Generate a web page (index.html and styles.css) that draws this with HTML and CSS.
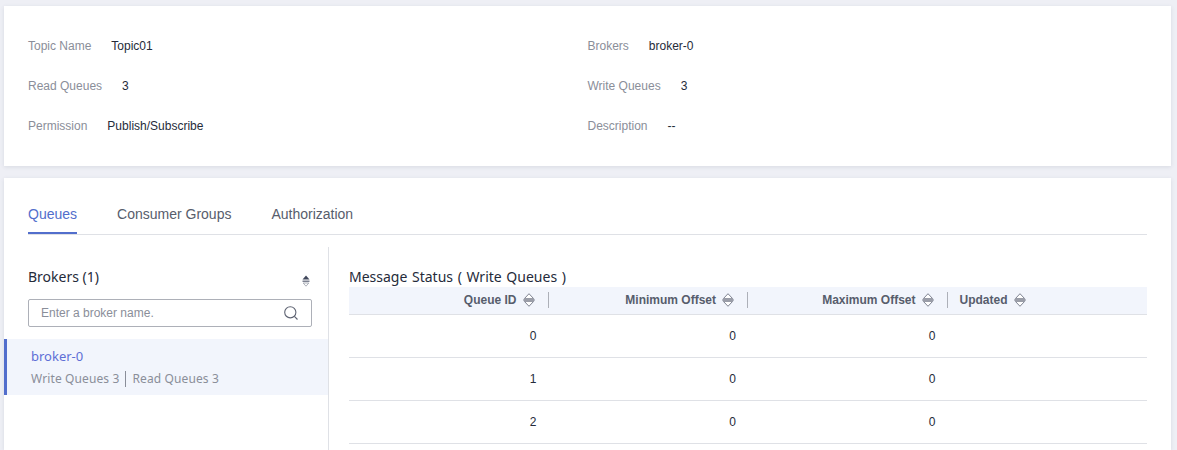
FILE: index.html
```html
<!DOCTYPE html>
<html lang="en">
<head>
<meta charset="utf-8">
<title>Topic01</title>
<link rel="stylesheet" href="styles.css">
</head>
<body>
<main class="page">
  <section class="card info">
    <div class="field"><span class="label">Topic Name</span><span class="value">Topic01</span></div>
    <div class="field"><span class="label">Brokers</span><span class="value">broker-0</span></div>
    <div class="field"><span class="label">Read Queues</span><span class="value">3</span></div>
    <div class="field"><span class="label">Write Queues</span><span class="value">3</span></div>
    <div class="field"><span class="label">Permission</span><span class="value">Publish/Subscribe</span></div>
    <div class="field"><span class="label">Description</span><span class="value">--</span></div>
  </section>
  <section class="card detail">
    <nav class="tabs">
      <a class="tab active">Queues</a>
      <a class="tab">Consumer Groups</a>
      <a class="tab">Authorization</a>
    </nav>
    <div class="split">
      <aside class="side">
        <div class="side-head">
          <h2 class="side-title">Brokers (1)</h2>
          <svg class="side-sort" width="8" height="12" viewBox="0 0 8 12"><path d="M4 .5 7.5 4.5H.5z" fill="#41485c"/><path d="M.5 5.5h7v1.5h-7z" fill="#7c8190"/><path d="M1.2 8h5.6L4 11.2z" fill="#fff" stroke="#9a9eaa" stroke-width=".8"/></svg>
        </div>
        <div class="search">
          <span class="search-text">Enter a broker name.</span>
          <svg class="search-icon" width="16" height="16" viewBox="0 0 16 16" fill="none" stroke="#5f6473" stroke-width="1.1"><circle cx="7.3" cy="7.3" r="5.6"/><path d="m11.4 11.4 3.1 3.1"/></svg>
        </div>
        <div class="broker">
          <div class="broker-name">broker-0</div>
          <div class="broker-meta"><span>Write Queues 3</span><i class="meta-sep"></i><span>Read Queues 3</span></div>
        </div>
      </aside>
      <div class="content">
        <h3 class="content-title">Message Status ( Write Queues )</h3>
        <table class="table">
          <thead>
            <tr>
              <th class="num"><span class="th-inner">Queue ID <svg class="sort" width="12" height="14" viewBox="0 0 12 14"><path d="M6 .7 11 6v2l-5 5.3L1 8V6z" fill="#fff" stroke="#7f8391"/><path d="M1 5h10v4H1z" fill="#9a9da8"/></svg></span></th>
              <th class="num"><span class="th-inner">Minimum Offset <svg class="sort" width="12" height="14" viewBox="0 0 12 14"><path d="M6 .7 11 6v2l-5 5.3L1 8V6z" fill="#fff" stroke="#7f8391"/><path d="M1 5h10v4H1z" fill="#9a9da8"/></svg></span></th>
              <th class="num"><span class="th-inner">Maximum Offset <svg class="sort" width="12" height="14" viewBox="0 0 12 14"><path d="M6 .7 11 6v2l-5 5.3L1 8V6z" fill="#fff" stroke="#7f8391"/><path d="M1 5h10v4H1z" fill="#9a9da8"/></svg></span></th>
              <th class="txt"><span class="th-inner">Updated <svg class="sort" width="12" height="14" viewBox="0 0 12 14"><path d="M6 .7 11 6v2l-5 5.3L1 8V6z" fill="#fff" stroke="#7f8391"/><path d="M1 5h10v4H1z" fill="#9a9da8"/></svg></span></th>
            </tr>
          </thead>
          <tbody>
            <tr><td class="num">0</td><td class="num">0</td><td class="num">0</td><td></td></tr>
            <tr><td class="num">1</td><td class="num">0</td><td class="num">0</td><td></td></tr>
            <tr><td class="num">2</td><td class="num">0</td><td class="num">0</td><td></td></tr>
          </tbody>
        </table>
      </div>
    </div>
  </section>
</main>
</body>
</html>
```

FILE: styles.css
```css
* { box-sizing: border-box; }
html, body { margin: 0; height: 450px; overflow: hidden; }
body { background: #eeeff5; font-family: "Liberation Sans", Arial, sans-serif; font-size: 12px; color: #252b3a; }
.page { padding: 6px 6px 0 4px; display: flex; flex-direction: column; gap: 12px; }
.card { background: #fff; box-shadow: 0 1px 4px rgba(60, 70, 100, .12); }
.info { height: 160px; padding: 20px 24px; display: grid; grid-template-columns: 1fr 1fr; grid-auto-rows: 40px; }
.field { display: flex; align-items: center; gap: 20px; }
.label { color: #8a8e99; }
.value { color: #252b3a; }
.detail { padding: 16px 24px 0; height: 272px; overflow: hidden; }
.tabs { display: flex; gap: 40px; height: 41px; border-bottom: 1px solid #dfe1e6; }
.tab { font-size: 14px; line-height: 40px; height: 40px; color: #575d6c; }
.tab.active { color: #526ecc; border-bottom: 2px solid #526ecc; }
.split { display: flex; margin: 12px -24px 0; }
.side { width: 325px; height: 240px; border-right: 1px solid #dfe1e6; flex: none; }
.side-head { display: flex; justify-content: space-between; align-items: flex-end; height: 40px; padding: 0 18px 0 24px; }
.side-title { margin: 0; font-family: "Noto Sans", sans-serif; font-size: 14px; font-weight: 400; line-height: 20px; color: #252b3a; }
.search { margin: 12px 16px 0 24px; height: 28px; border: 1px solid #adb0b8; border-radius: 2px; display: flex; align-items: center; justify-content: space-between; padding: 0 12px; }
.search-text { color: #8a8e99; }
.broker { margin-top: 12px; height: 56px; background: #f2f5fc; border-left: 3px solid #526ecc; padding: 9px 0 0 24px; font-family: "Noto Sans", sans-serif; }
.broker-name { font-size: 13px; line-height: 17px; color: #5e6fd6; }
.broker-meta { margin-top: 5px; display: flex; align-items: center; gap: 6px; font-size: 12px; letter-spacing: .12px; line-height: 17px; color: #8a8e99; }
.meta-sep { width: 1px; height: 16px; background: #8a8e99; }
.content { flex: 1; padding: 20px 24px 0 20px; }
.content-title { margin: 0 0 1px; font-family: "Noto Sans", sans-serif; font-size: 14px; font-weight: 400; line-height: 19px; word-spacing: 1px; color: #252b3a; }
.table { width: 798px; border-collapse: collapse; table-layout: fixed; }
.table th { height: 27px; padding: 0; background: #f2f5fc; font-size: 12px; font-weight: 700; color: #575d6c; border-bottom: 1px solid #dfe1e6; }
.table th.num { text-align: right; }
.table th.txt { text-align: left; }
.th-inner { display: flex; align-items: center; gap: 6px; height: 16px; padding: 0 13px 0 12px; justify-content: flex-end; border-right: 1px solid #adb0b8; }
.txt .th-inner { justify-content: flex-start; border-right: 0; }
.sort { flex: none; }
.table td { height: 43px; padding: 0 12px; color: #252b3a; border-bottom: 1px solid #dfe1e6; }
.table td.num { text-align: right; }
```
